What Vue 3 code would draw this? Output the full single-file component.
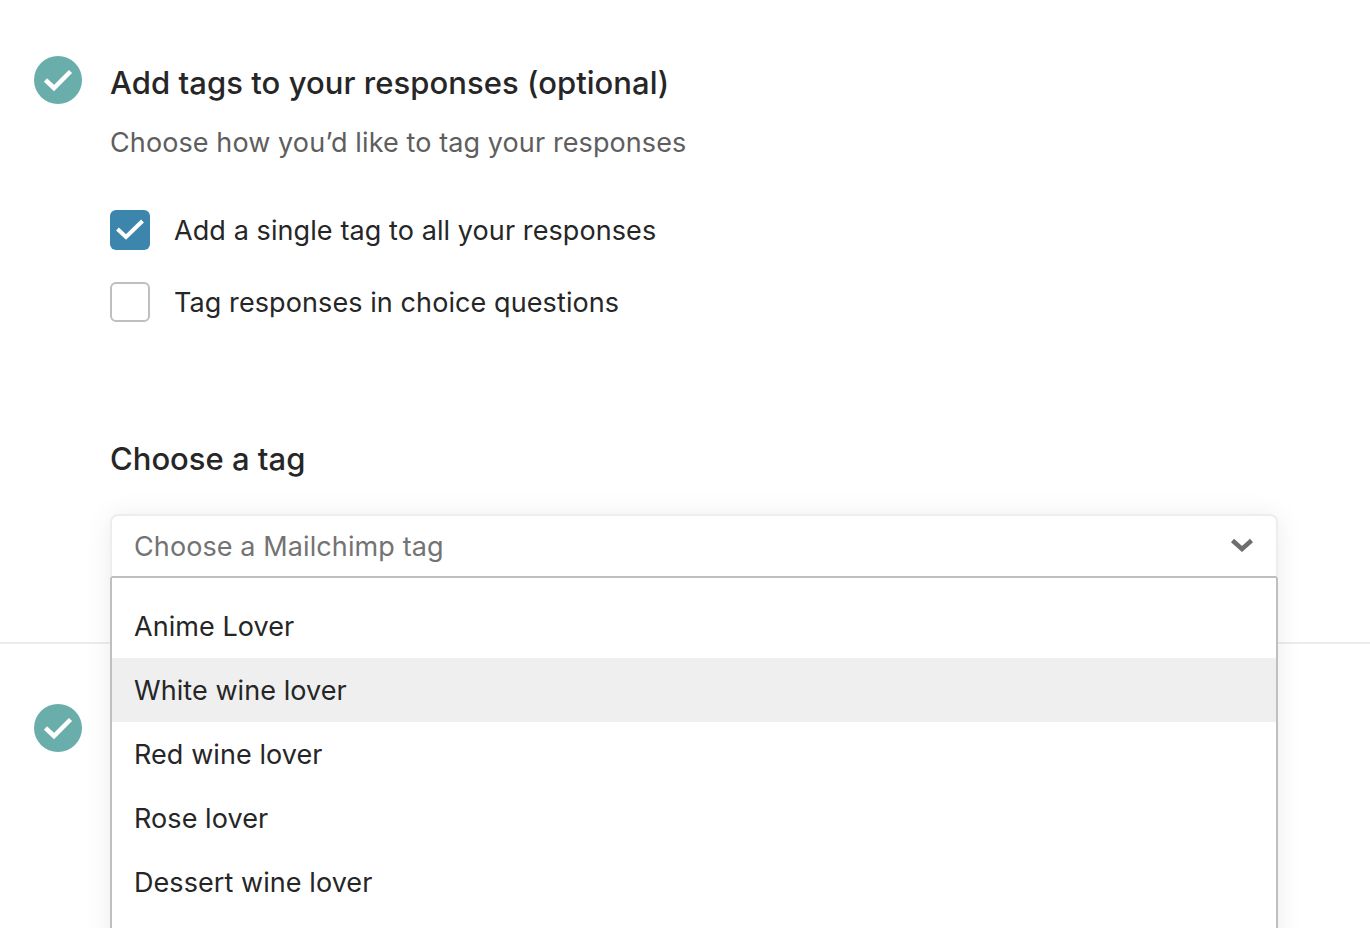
<template>
  <div class="page">
    <section class="step step-first">
      <span class="done-badge">
        <svg viewBox="0 0 48 48" width="48" height="48"><path d="M11.5 24 L20 32 L36.5 15.5" /></svg>
      </span>
      <div class="step-body">
        <h2 class="step-title">Add tags to your responses (optional)</h2>
        <p class="step-sub">Choose how you’d like to tag your responses</p>

        <div class="options">
          <label v-for="opt in options" :key="opt.label" class="option">
            <span class="box" :class="{ checked: opt.checked }">
              <svg v-if="opt.checked" viewBox="0 0 40 40" width="40" height="40"><path d="M7.5 19 L16 27 L32.5 11" /></svg>
            </span>
            <span class="option-label">{{ opt.label }}</span>
          </label>
        </div>

        <h3 class="field-title">Choose a tag</h3>

        <div class="select">
          <div class="select-head">
            <span>Choose a Mailchimp tag</span>
            <svg class="chevron" viewBox="0 0 24 14" width="24" height="14"><path d="M2.5 2.5 L12 11 L21.5 2.5" /></svg>
          </div>
          <ul class="select-list">
            <li v-for="tag in tags" :key="tag" :class="{ hover: tag === 'White wine lover' }">{{ tag }}</li>
          </ul>
        </div>
      </div>
    </section>

    <section class="step step-second">
      <span class="done-badge">
        <svg viewBox="0 0 48 48" width="48" height="48"><path d="M11.5 24 L20 32 L36.5 15.5" /></svg>
      </span>
    </section>
  </div>
</template>

<script setup>
const options = [
  { label: 'Add a single tag to all your responses', checked: true },
  { label: 'Tag responses in choice questions', checked: false },
]

const tags = ['Anime Lover', 'White wine lover', 'Red wine lover', 'Rose lover', 'Dessert wine lover']
</script>

<style>
html, body {
  margin: 0;
  background: #fff;
}
</style>

<style scoped>
.page {
  height: 928px;
  overflow: hidden;
  background: #fff;
  color: #262627;
  font-family: Inter, "Liberation Sans", sans-serif;
}

.step {
  display: flex;
  gap: 28px;
  padding-left: 34px;
  box-sizing: border-box;
}

.step-first {
  height: 644px;
  padding-top: 56px;
  border-bottom: 2px solid #ededed;
}

.step-second {
  padding-top: 60px;
}

.done-badge {
  flex: none;
  width: 48px;
  height: 48px;
  border-radius: 50%;
  background: #6aaeac;
}

.done-badge svg {
  display: block;
}

.done-badge path {
  fill: none;
  stroke: #fff;
  stroke-width: 4.5;
}

.step-body {
  width: 1168px;
}

.step-title {
  margin: 8px 0 0;
  font-size: 31px;
  line-height: 38px;
  font-weight: 500;
  letter-spacing: 0.05px;
}

.step-sub {
  margin: 23px 0 0;
  font-size: 27px;
  line-height: 36px;
  font-weight: 400;
  letter-spacing: 0.1px;
  color: #5e5e5e;
}

.options {
  display: flex;
  flex-direction: column;
  gap: 32px;
  margin-top: 49px;
}

.option {
  display: flex;
  align-items: center;
  gap: 24px;
  font-size: 27px;
  line-height: 40px;
  letter-spacing: 0.09px;
}

.option-label {
  height: 40px;
  line-height: 42px;
}

.box {
  box-sizing: border-box;
  width: 40px;
  height: 40px;
  border: 2px solid #bfbfbf;
  border-radius: 6px;
  background: #fff;
}

.box.checked {
  border: 0;
  background: #3c86ad;
}

.box svg {
  display: block;
}

.box path {
  fill: none;
  stroke: #fff;
  stroke-width: 4;
}

.field-title {
  margin: 118px 0 0;
  font-size: 31px;
  line-height: 38px;
  font-weight: 500;
}

.select {
  position: relative;
  z-index: 2;
  margin-top: 36px;
  font-size: 27px;
  letter-spacing: 0.07px;
  box-shadow: 0 2px 28px rgba(0, 0, 0, 0.08);
  border-radius: 8px 8px 0 0;
  background: #fff;
}

.select-head {
  display: flex;
  align-items: center;
  justify-content: space-between;
  box-sizing: border-box;
  height: 64px;
  padding: 0 22px;
  color: #737373;
  letter-spacing: 0.1px;
  border: 2px solid #ededed;
  border-bottom: 2px solid #bfbfbf;
  border-radius: 8px 8px 0 0;
}

.chevron path {
  fill: none;
  stroke: #6e6e6e;
  stroke-width: 4.5;
}

.chevron {
  margin-bottom: 2px;
}

.select-list {
  margin: 0;
  padding: 16px 0 0;
  height: 400px;
  list-style: none;
  border: 2px solid #bfbfbf;
  border-top: 0;
  color: #262627;
}

.select-list li {
  height: 64px;
  padding: 1px 22px 0;
  box-sizing: border-box;
  line-height: 64px;
}

.select-list li.hover {
  background: #efefef;
}
</style>
